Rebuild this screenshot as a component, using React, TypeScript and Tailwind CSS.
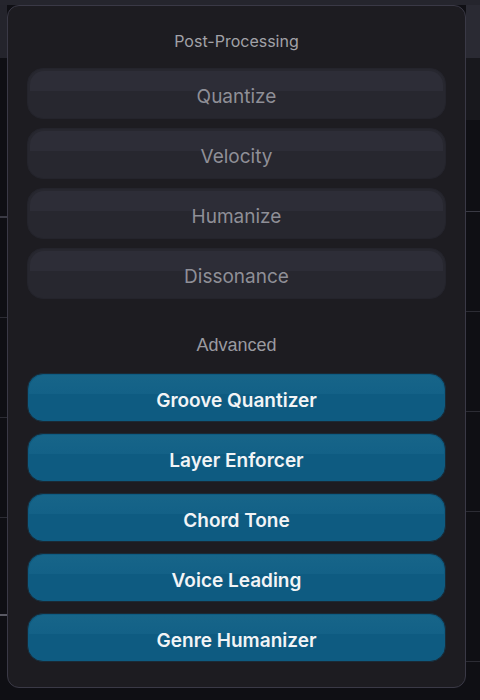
import React from "react";

const gray = ["Quantize", "Velocity", "Humanize", "Dissonance"];
const blue = ["Groove Quantizer", "Layer Enforcer", "Chord Tone", "Voice Leading", "Genre Humanizer"];

function GrayBtn({ label }: { label: string }) {
  return (
    <button className="relative flex h-[51px] w-full items-center justify-center rounded-[16px] border border-[#24242c] bg-[#27272f] pt-[7px] text-[19px] leading-[24px] text-[#8f8f97] overflow-hidden">
      <span className="absolute left-[2px] right-[2px] top-[2px] h-[20px] rounded-t-[14px] bg-[#2d2d37]" />
      <span className="relative">{label}</span>
    </button>
  );
}

function BlueBtn({ label }: { label: string }) {
  return (
    <button className="relative flex h-[49px] w-full items-center justify-center rounded-[16px] border border-[#1a2a36] bg-[#0e5b81] pt-[7px] text-[19px] leading-[24px] font-semibold text-[#f2f4f6] overflow-hidden">
      <span className="absolute left-[1px] right-[1px] top-[1px] h-[19px] rounded-t-[15px] bg-[linear-gradient(to_bottom,#176589,#136187)]" />
      <span className="relative">{label}</span>
    </button>
  );
}

export default function App() {
  return (
    <div
      className="flex h-[700px] w-[480px] overflow-hidden border-t-[5px] border-[#25252d] bg-[#0f0f14]"
      style={{ fontFamily: "Inter, 'Noto Sans', sans-serif" }}
    >
      <div className="flex w-[7px] flex-col">
        <div className="h-[53px] bg-[#24242c]" />
        <div className="h-[160px] border-b-2 border-[#3a3a44]" />
        <div className="h-[100px] border-b border-[#2c2c34]" />
        <div className="h-[100px] border-b border-[#2c2c34]" />
        <div className="h-[100px] border-b border-[#2c2c34]" />
        <div className="h-[98px] border-b-2 border-[#5a5a64]" />
      </div>

      <div className="flex h-[683px] w-[459px] flex-col rounded-[12px] border-[1.5px] border-[#3a3946] bg-[#1d1c21] px-[19px] pt-[25px]">
        <div className="h-[21px] text-center text-[16px] leading-[21px] text-[#a2a2a8]">Post-Processing</div>
        <div className="mt-[16px] flex flex-col gap-[9px]">
          {gray.map((g) => (
            <GrayBtn key={g} label={g} />
          ))}
        </div>
        <div
          className="mt-[36px] h-[20px] text-center text-[18px] leading-[20px] text-[#9a9aa0]"
          style={{ fontFamily: "'Liberation Sans', Arial, sans-serif" }}
        >
          Advanced
        </div>
        <div className="mt-[18px] flex flex-col gap-[11px]">
          {blue.map((b) => (
            <BlueBtn key={b} label={b} />
          ))}
        </div>
      </div>

      <div className="flex w-[14px] flex-col">
        <div className="h-[53px] bg-[#2a2a33]" />
        <div className="h-[62px] bg-[#18181d]" />
        <div className="h-[92px] border-b border-[#3a3a44]" />
        <div className="h-[100px] border-b border-[#2c2c34]" />
        <div className="h-[100px] border-b border-[#2c2c34]" />
        <div className="h-[100px] border-b border-[#2c2c34]" />
        <div className="h-[150px] border-b border-[#2c2c34]" />
      </div>
    </div>
  );
}
